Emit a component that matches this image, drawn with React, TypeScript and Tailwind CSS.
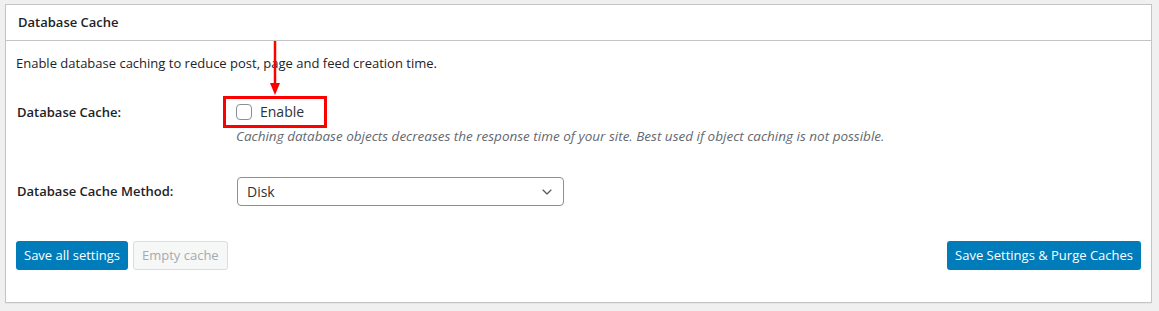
import { ChevronDown } from "lucide-react";

export default function App() {
  return (
    <div
      className="w-[1159px] h-[311px] bg-[#f0f0f1] pt-[4px] pl-[5px] text-[13px] text-[#1d2327]"
      style={{ fontFamily: '"Open Sans", "Noto Sans", sans-serif' }}
    >
      <div className="relative w-[1147px] h-[299px] bg-white border border-[#c3c4c7] shadow-[0_1px_1px_rgba(0,0,0,0.04)]">
        {/* Header */}
        <div className="h-[36px] border-b border-[#c3c4c7] pl-[12px] flex items-center">
          <h2 className="text-[13px] font-semibold">Database Cache</h2>
        </div>

        {/* Body */}
        <div className="px-[10px]">
          <p className="mt-[12px] leading-[20px]">
            Enable database caching to reduce post, page and feed creation time.
          </p>

          <div className="flex mt-[29px]">
            <div className="w-[220px] pl-[1px] font-semibold leading-[20px]">Database Cache:</div>
            <div>
              <label className="relative flex items-center gap-[8px] leading-[20px] text-[#2c3338]">
                <span className="w-[16px] h-[16px] rounded-[4px] border border-[#8c8f94] bg-white" />
                <span className="text-[14px]">Enable</span>
                <span className="absolute left-[-13px] top-[-6px] w-[104px] h-[32px] border-[3px] border-[#f00]" />
              </label>
              <p className="mt-[4px] italic text-[13.5px] text-[#646970] leading-[20px]">
                Caching database objects decreases the response time of your site. Best used if object caching is not possible.
              </p>
            </div>
          </div>

          <div className="flex items-center mt-[31px]">
            <div className="w-[221px] pl-[1px] font-semibold">Database Cache Method:</div>
            <div className="w-[327px] h-[29px] border border-[#8c8f94] rounded-[4px] flex items-center justify-between pl-[9px] pr-[8px] text-[14px] text-[#2c3338]">
              <span>Disk</span>
              <ChevronDown size={16} strokeWidth={1.75} className="text-[#50575e]" />
            </div>
          </div>

          <div className="flex items-center justify-between mt-[35px]">
            <div className="flex gap-[5px]">
              <button className="h-[29px] px-[8px] rounded-[3px] bg-[#007cba] text-white text-[13px]">
                Save all settings
              </button>
              <button className="h-[29px] px-[8px] rounded-[3px] bg-[#f6f7f7] border border-[#dcdcde] text-[#a7aaad] text-[13px]">
                Empty cache
              </button>
            </div>
            <button className="h-[29px] px-[8px] rounded-[3px] bg-[#007cba] text-white text-[13px]">
              Save Settings &amp; Purge Caches
            </button>
          </div>
        </div>

        {/* Red annotation arrow */}
        <svg className="absolute left-[262px] top-[36px]" width="14" height="58" viewBox="0 0 14 58">
          <line x1="7" y1="0" x2="7" y2="44" stroke="#f00" strokeWidth="2.5" />
          <polygon points="2,42 12,42 7,54" fill="#f00" />
        </svg>
      </div>
    </div>
  );
}
